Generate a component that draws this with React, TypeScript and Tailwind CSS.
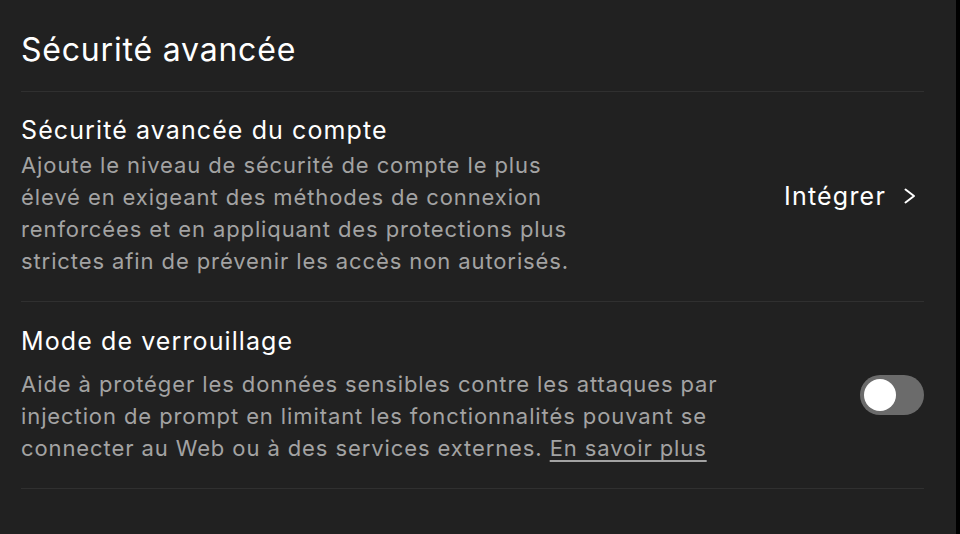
import { useState } from "react";

export default function App() {
  const [lockdown, setLockdown] = useState(false);

  return (
    <div className="flex h-[534px] w-[960px] bg-black font-['Inter',sans-serif] antialiased">
      <div className="h-full w-[956px] bg-[#212121] pl-[21px] pr-[32px] pt-[30px]">
        <h1 className="border-b border-[#303030] pb-[21px] text-[32px] leading-[40px] tracking-[0.8px] text-white">
          Sécurité avancée
        </h1>

        <div className="flex items-center justify-between border-b border-[#303030] pb-[24px] pt-[22px]">
          <div className="max-w-[578px]">
            <div className="text-[25px] leading-[32px] tracking-[1.1px] text-white">
              Sécurité avancée du compte
            </div>
            <p className="mt-[3px] text-[22px] leading-[32px] tracking-[0.9px] text-[#a3a3a3]">
              Ajoute le niveau de sécurité de compte le plus élevé en exigeant des méthodes de
              connexion renforcées et en appliquant des protections plus strictes afin de prévenir
              les accès non autorisés.
            </p>
          </div>
          <button className="flex items-center gap-[18px] pr-[8px] text-[25px] leading-[32px] tracking-[1.2px] text-white">
            Intégrer
            <svg width="12" height="16" viewBox="0 0 12 16" fill="none" className="mt-[1px]">
              <path
                d="M1.5 1.5 10 8l-8.5 6.5"
                stroke="currentColor"
                strokeWidth="2"
                strokeLinecap="round"
                strokeLinejoin="round"
              />
            </svg>
          </button>
        </div>

        <div className="flex items-center justify-between border-b border-[#303030] pb-[24px] pt-[23px]">
          <div className="max-w-[725px]">
            <div className="text-[25px] leading-[32px] tracking-[1.1px] text-white">
              Mode de verrouillage
            </div>
            <p className="mt-[11px] text-[22px] leading-[32px] tracking-[0.9px] text-[#a3a3a3]">
              Aide à protéger les données sensibles contre les attaques par injection de prompt
              en limitant les fonctionnalités pouvant se connecter au Web ou à des services
              externes.{" "}
              <a href="#" className="underline underline-offset-[4px]">
                En savoir plus
              </a>
            </p>
          </div>
          <button
            onClick={() => setLockdown((v) => !v)}
            className={`flex h-[40px] w-[64px] items-center rounded-full p-[4px] ${
              lockdown ? "justify-end bg-[#10a37f]" : "justify-start bg-[#6b6b6b]"
            }`}
            aria-label="Mode de verrouillage"
          >
            <span className="h-[32px] w-[32px] rounded-full bg-white" />
          </button>
        </div>
      </div>
    </div>
  );
}
